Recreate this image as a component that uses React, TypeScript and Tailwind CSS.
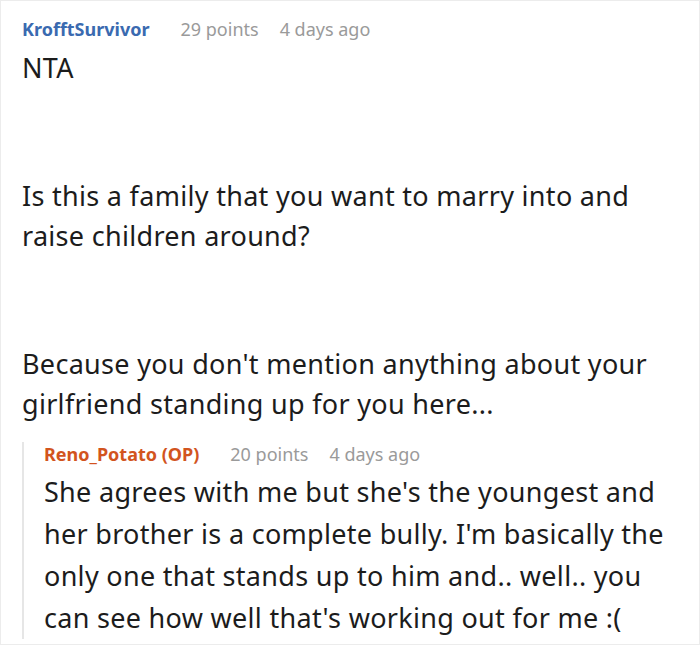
import React from "react";

type CommentMeta = {
  author: string;
  points: number;
  age: string;
};

function MetaLine({ meta, authorClass }: { meta: CommentMeta; authorClass: string }) {
  return (
    <div className="flex items-baseline h-[24px] leading-[24px] text-[18px]">
      <span className={`font-bold ${authorClass}`}>{meta.author}</span>
      <span className="ml-[31px] text-[#9a9a9a]">{meta.points} points</span>
      <span className="ml-[21px] text-[#9a9a9a]">{meta.age}</span>
    </div>
  );
}

export default function App() {
  const parent: CommentMeta = { author: "KrofftSurvivor", points: 29, age: "4 days ago" };
  const reply: CommentMeta = { author: "Reno_Potato (OP)", points: 20, age: "4 days ago" };

  return (
    <div
      className="w-[700px] h-[645px] overflow-hidden border border-[#ececec] bg-white text-[#1c1c1c]"
      style={{ fontFamily: '"Noto Sans", "Open Sans", sans-serif' }}
    >
      <div className="pl-[21px] pt-[16px] pr-2">
        <MetaLine meta={parent} authorClass="text-[#3a6ab0]" />
        <div className="mt-[7px] text-[27px] tracking-[0.3px] leading-[40px]">
          <p className="mb-[88px]">NTA</p>
          <p className="mb-[88px]">
            Is this a family that you want to marry into and raise children around?
          </p>
          <p>
            Because you don't mention anything about your girlfriend standing up for you here...
          </p>
        </div>

        {/* reply */}
        <div className="mt-[18px] border-l-2 border-[#e6e6e6] pl-[20px]">
          <MetaLine meta={reply} authorClass="text-[#d2541e]" />
          <p className="mt-[5px] text-[27px] tracking-[0.3px] leading-[42px]">
            She agrees with me but she's the youngest and her brother is a complete bully. I'm
            basically the only one that stands up to him and.. well.. you can see how well that's
            working out for me :(
          </p>
        </div>
      </div>
    </div>
  );
}
